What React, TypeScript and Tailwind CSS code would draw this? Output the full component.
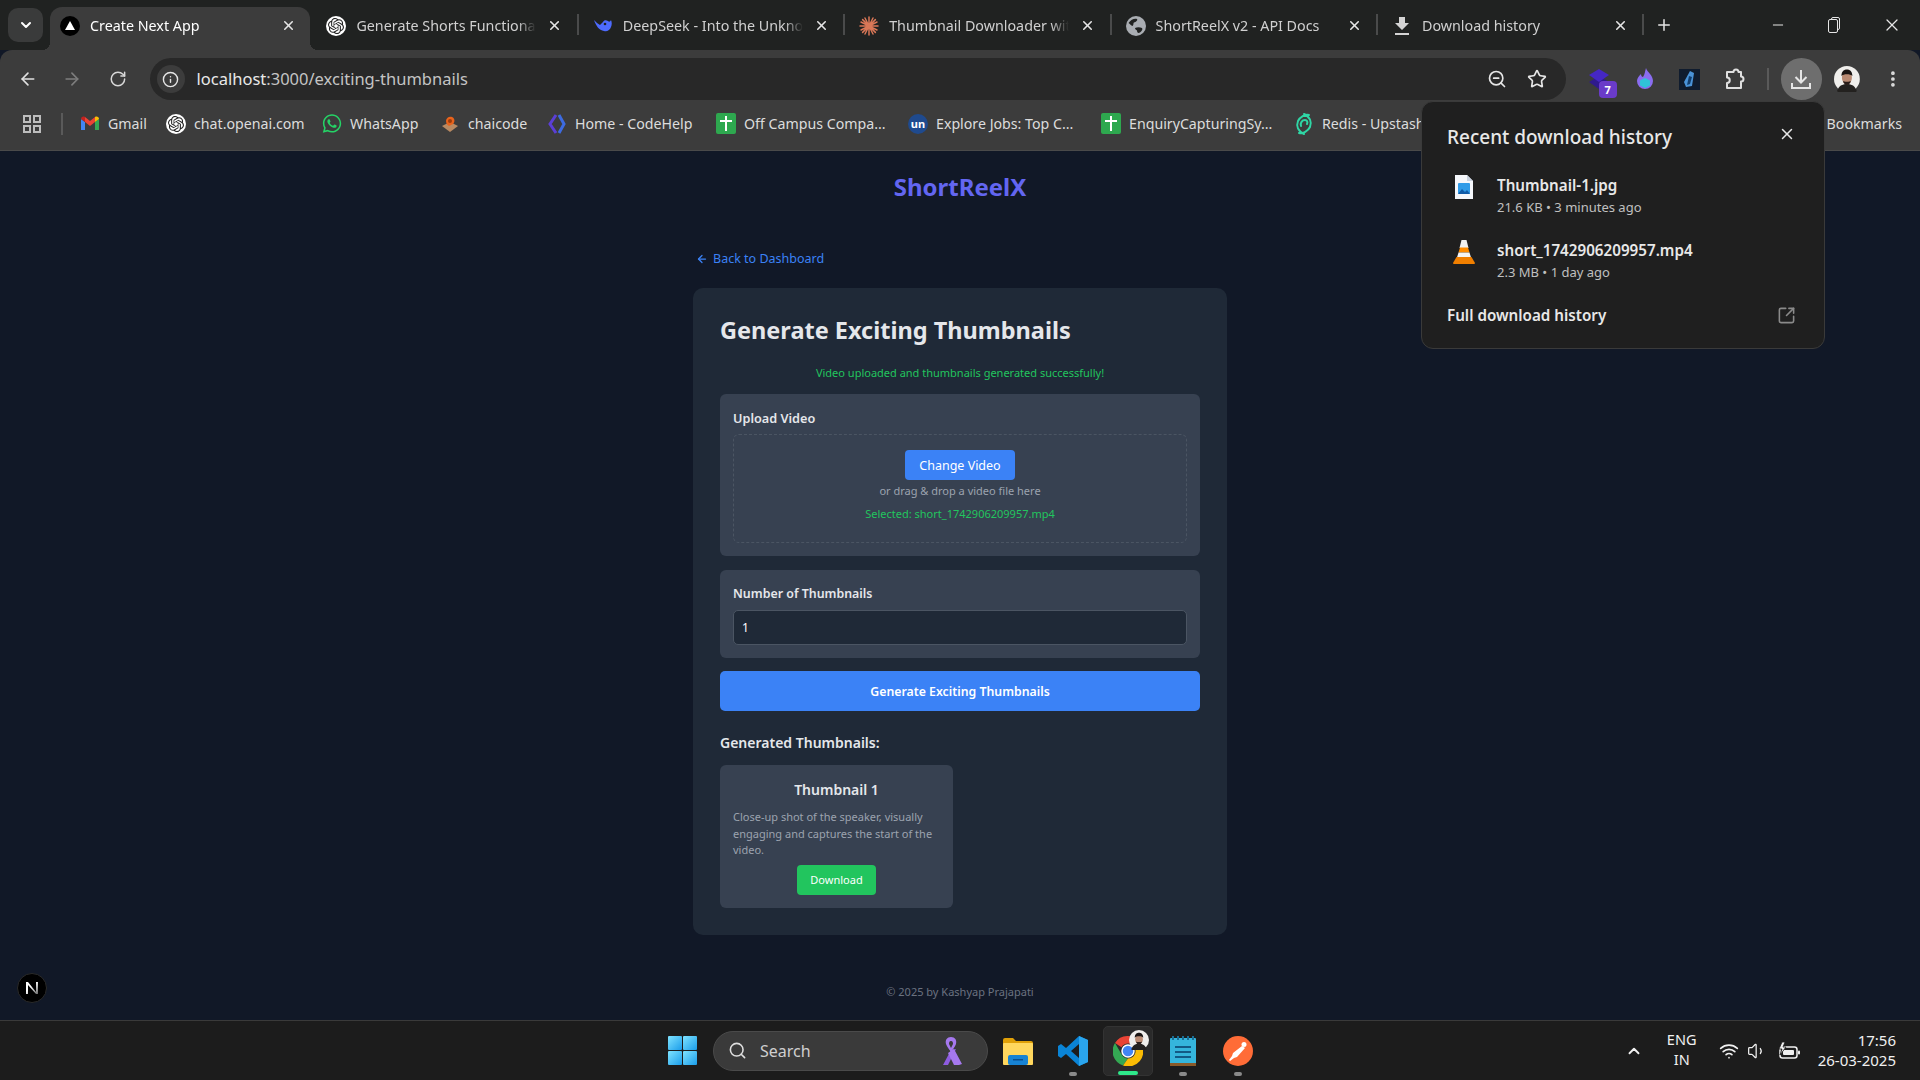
import React from "react";
import {
  ArrowLeft,
  ArrowRight,
  ChevronDown,
  ChevronUp,
  EllipsisVertical,
  Info,
  Minus,
  Plus,
  RotateCw,
  Search,
  SquareArrowOutUpRight,
  Star,
  Volume1,
  Wifi,
  X,
  ZoomOut,
} from "lucide-react";
import { FaWhatsapp } from "react-icons/fa";
import { SiOpenai } from "react-icons/si";

const NextIcon = () => (
  <span className="flex h-5 w-5 items-center justify-center rounded-full bg-black">
    <svg width="10" height="9" viewBox="0 0 10 9"><path d="M5 0l5 9H0z" fill="#fff" /></svg>
  </span>
);

const OpenAiIcon = () => (
  <span className="flex h-5 w-5 items-center justify-center rounded-full bg-white">
    <SiOpenai className="h-4 w-4 text-[#222]" />
  </span>
);

const DeepSeekIcon = () => (
  <svg width="20" height="20" viewBox="0 0 20 20">
    <path d="M1 4c2 6 5 10 10 11 3 1 6-1 7-4 1-2 1-5 0-7-1 2-2 2-3 1-2-1-4-1-5 1L7 9C5 8 3 6 1 4z" fill="#4d6bfe" />
    <circle cx="12" cy="8" r="1.3" fill="#202221" />
  </svg>
);

const ClaudeIcon = () => (
  <svg width="20" height="20" viewBox="0 0 20 20" stroke="#d97757" strokeWidth="1.5" strokeLinecap="round">
    <path d="M10 1v18M1 10h18M3.6 3.6l12.8 12.8M16.4 3.6L3.6 16.4M6 2l8 16M14 2L6 18M2 6l16 8M18 6L2 14" />
  </svg>
);

const GlobeFilled = () => (
  <svg width="20" height="20" viewBox="0 0 20 20">
    <circle cx="10" cy="10" r="10" fill="#a9adb2" />
    <path d="M2.500 7C5 3 9 2 11 3c1 1-1 3-3 3.500C7 7 8 9 6.500 10 5 9.500 4 8 2.500 7zM9 12c2-1 5-1 7 0 1 1 0 3-2 4.500-2 1-3 0-3-2-1-.5-2-1.500-2-2.500z" fill="#202221" />
  </svg>
);

const TabDownload = () => (
  <svg width="16" height="20" viewBox="0 0 16 20" fill="#d4d4d4">
    <path d="M5 1h6v6h4l-7 7-7-7h4z" />
    <rect x="1" y="17" width="14" height="2" />
  </svg>
);

const GmailIcon = () => (
  <svg width="20" height="20" viewBox="0 0 20 20">
    <path d="M1 5v11h4V8z" fill="#4285f4" />
    <path d="M19 5v11h-4V8z" fill="#34a853" />
    <path d="M5 8l5 4 5-4V3l-5 4-5-4z" fill="#ea4335" />
    <path d="M1 5c0-2 2-3 4-2v5z" fill="#c5221f" />
    <path d="M19 5c0-2-2-3-4-2v5z" fill="#fbbc04" />
  </svg>
);

const ChaiIcon = () => (
  <svg width="20" height="20" viewBox="0 0 20 20">
    <path d="M2 12l8-4 8 4-8 6z" fill="#b98a62" />
    <path d="M6 7c0-3 3-5 6-4 3 1 3 5 1 7l-4 2c-2-1-3-3-3-5z" fill="#e8631c" />
    <circle cx="10" cy="7" r="2" fill="#9c3d0c" />
  </svg>
);

const CodeHelpIcon = () => (
  <svg width="20" height="22" viewBox="0 0 20 22" fill="none" strokeWidth="3">
    <path d="M9 2L3 11l6 9" stroke="#5b3fd6" />
    <path d="M12 2l5 9-5 9" stroke="#3d6be0" />
  </svg>
);

const SheetIcon = () => (
  <span className="flex h-[21px] w-5 items-center justify-center rounded-[2px] bg-[#2ea84f]">
    <svg width="12" height="15" viewBox="0 0 12 15" fill="#fff"><path d="M5 0h2v4h5v2H7v9H5V6H0V4h5z" /></svg>
  </span>
);

const UnIcon = () => (
  <span className="flex h-5 w-5 items-center justify-center rounded-full bg-[#1f4a8e] text-[11px] font-bold leading-none text-white">un</span>
);

const RedisIcon = () => (
  <svg width="18" height="24" viewBox="0 0 18 24" fill="none" stroke="#2fd6a5" strokeWidth="2" strokeLinecap="round">
    <path d="M9 22C3 19 1 14 3 9c2-4 7-7 11-6M9 2c6 3 8 8 6 13-2 4-7 7-11 6M6 14c-1-3 1-6 4-6 2 0 3 2 2 4" />
  </svg>
);

const ExtStack = () => (
  <span className="relative flex h-6 w-6 items-center justify-center">
    <svg width="22" height="20" viewBox="0 0 22 20"><path d="M11 7l10 6-10 7-10-7z" fill="#2f1a8c" /><path d="M11 0l10 6-10 7L1 6z" fill="#4527c4" /></svg>
    <span className="absolute left-[12px] top-[14px] flex h-[17px] w-[18px] items-center justify-center rounded-[4px] bg-[#6a3bc9] text-[11px] font-bold leading-none text-white">7</span>
  </span>
);

const ExtFlame = () => (
  <svg width="18" height="22" viewBox="0 0 18 22">
    <path d="M10 0c1 4 7 7 7 13a8 8 0 01-16 0c0-3 2-5 4-7 0 2 1 3 2 3 2-3 2-6 3-9z" fill="#8a6df0" />
    <path d="M9 10l5 2.500v5L9 20l-5-2.500v-5z" fill="#2fc4d8" />
  </svg>
);

const ExtBlue = () => (
  <span className="flex h-[21px] w-[21px] items-center justify-center bg-[#101c2e]">
    <svg width="12" height="18" viewBox="0 0 12 18"><path d="M7 1l4 2-2 13-6 1-2-5z" fill="#4a93d8" /><path d="M6 6l3 1-2 7-3 1z" fill="#123f70" /></svg>
  </span>
);

const PuzzleOutline = () => (
  <svg width="22" height="22" viewBox="0 0 22 22" fill="none" stroke="#e0e0e0" strokeWidth="2" strokeLinejoin="round">
    <path d="M7 4h2.500a2.500 2.500 0 015 0H17v4.500a2.500 2.500 0 010 5V20H3v-5a2.500 2.500 0 000-5.500V4z" />
  </svg>
);

const TrayDownload = () => (
  <svg width="24" height="24" viewBox="0 0 24 24" fill="none" stroke="#e6e6e6" strokeWidth="2">
    <path d="M12 3v12M6.500 10l5.500 5.500 5.500-5.500" />
    <path d="M3 16v5h18v-5" />
  </svg>
);

const Avatar = ({ className }: { className: string }) => (
  <svg className={className} viewBox="0 0 26 26">
    <circle cx="13" cy="13" r="13" fill="#f0efec" />
    <path d="M3 25c2-5 5-7 10-7s8 2 10 7a13 13 0 01-20 0z" fill="#23211f" />
    <ellipse cx="13" cy="12" rx="5" ry="6.500" fill="#b98a72" />
    <path d="M7.500 10c0-5 3-6.500 5.500-6.500s5.500 1.500 5.500 6.500c-2-2.500-9-2.500-11 0z" fill="#1a1513" />
    <path d="M9 15c1 3 2.500 4 4 4s3-1 4-4c-1 1-7 1-8 0z" fill="#2a1e1a" />
  </svg>
);

const WindowsLogo = () => (
  <svg width="29" height="29" viewBox="0 0 29 29">
    <defs>
      <linearGradient id="winA" x1="0" y1="0" x2="1" y2="1">
        <stop offset="0" stopColor="#7fe3ff" />
        <stop offset="1" stopColor="#1a9dea" />
      </linearGradient>
    </defs>
    <rect x="0" y="0" width="14" height="14" rx="1" fill="url(#winA)" />
    <rect x="15" y="0" width="14" height="14" rx="1" fill="url(#winA)" />
    <rect x="0" y="15" width="14" height="14" rx="1" fill="url(#winA)" />
    <rect x="15" y="15" width="14" height="14" rx="1" fill="url(#winA)" />
  </svg>
);

const RibbonIcon = () => (
  <svg width="22" height="30" viewBox="0 0 22 30">
    <path d="M11 14L3 29l-3-1 3 1 5 0 8-16z" fill="#8e5ce0" />
    <path d="M8 17l6 12 5 0 3-1-8-15z" fill="#a578ee" />
    <path d="M11 1c-4 0-6 3-5 7 1 3 3 5 5 8 2-3 4-5 5-8 1-4-1-7-5-7zm0 4c2 0 2 2 2 3l-2 4-2-4c0-1 0-3 2-3z" fill="#a578ee" />
  </svg>
);

const FolderIcon = () => (
  <svg width="30" height="28" viewBox="0 0 30 28">
    <path d="M0 3a2 2 0 012-2h8l3 3h15a2 2 0 012 2v4H0z" fill="#e0a008" />
    <rect x="0" y="6" width="30" height="22" rx="1" fill="#ffd75e" />
    <rect x="5" y="18" width="20" height="10" rx="2" fill="#1783d4" />
    <rect x="10" y="22" width="10" height="1.500" fill="#0a4f8f" />
  </svg>
);

const VsCodeIcon = () => (
  <svg width="30" height="30" viewBox="0 0 30 30">
    <path d="M21 0l9 4v22l-9 4-13-12-5 4-3-2V10l3-2 5 4zm0 8l-8 7 8 7z" fill="#0a84d6" />
    <path d="M21 0l9 4v22l-9 4z" fill="#2aa5ee" />
  </svg>
);

const ChromeIcon = () => (
  <svg width="30" height="30" viewBox="0 0 30 30">
    <path d="M15 0a15 15 0 0113 7.500H15a7.500 7.500 0 00-6.500 3.750L2 7A15 15 0 0115 0z" fill="#ea4335" />
    <path d="M2 7l6.500 11.250A7.500 7.500 0 0015 22.500l-5 7A15 15 0 012 7z" fill="#34a853" />
    <path d="M28 7.500A15 15 0 0110 29.500l5-7a7.500 7.500 0 006.500-11.250z" fill="#fbbc04" />
    <circle cx="15" cy="15" r="6" fill="#4285f4" stroke="#fff" strokeWidth="1.500" />
  </svg>
);

const NotepadIcon = () => (
  <svg width="26" height="30" viewBox="0 0 26 30">
    <rect x="0" y="2" width="26" height="26" rx="1" fill="#35b5dc" />
    <rect x="0" y="27" width="26" height="3" fill="#8a5a2a" />
    <path d="M2 0h2v4H2zM7 0h2v4H7zM12 0h2v4h-2zM17 0h2v4h-2zM22 0h2v4h-2z" fill="#1a6f96" />
    <path d="M5 10h16v2H5zM5 15h16v2H5zM5 20h16v2H5z" fill="#125a85" />
  </svg>
);

const PostmanIcon = () => (
  <svg width="30" height="30" viewBox="0 0 30 30">
    <circle cx="15" cy="15" r="15" fill="#ff6c37" />
    <circle cx="21" cy="8.500" r="2.500" fill="#fff" />
    <path d="M19 10l3 2-8 9-3 1-4 3-1-1 3-4 1-3z" fill="#fff" />
  </svg>
);

const BatteryIcon = () => (
  <svg width="22" height="18" viewBox="0 0 22 18" fill="none">
    <rect x="2" y="5" width="17" height="11" rx="2.500" stroke="#f0f0f0" strokeWidth="1.500" />
    <rect x="5" y="8" width="11" height="5" rx="1" fill="#f0f0f0" />
    <rect x="20" y="8.500" width="2" height="4" rx="1" fill="#f0f0f0" />
    <path d="M4 0L1 7h3l-2 6 6-8H5l2-5z" fill="#f0f0f0" stroke="#1c1c1c" strokeWidth="0.800" />
  </svg>
);

const JpgFileIcon = () => (
  <svg width="18" height="24" viewBox="0 0 18 24">
    <path d="M0 0h12l6 6v18H0z" fill="#f5f7fb" />
    <path d="M12 0l6 6h-6z" fill="#c8d2e0" />
    <rect x="3" y="8" width="12" height="11" rx="1" fill="#2f9be8" />
    <path d="M3 19l4-5 3 3 2-2 3 4z" fill="#0f5ba8" />
  </svg>
);

const VlcIcon = () => (
  <svg width="22" height="24" viewBox="0 0 22 24">
    <path d="M8.500 0h5l2 8h-9z" fill="#f1f1f1" />
    <path d="M7 7.500h8l1.500 5h-11z" fill="#ff8c00" />
    <path d="M5.500 12.500h11l1.500 5H4z" fill="#f4f4f4" />
    <path d="M3.500 17h15l3.500 6a1 1 0 01-1 1H1a1 1 0 01-1-1z" fill="#f07f00" />
  </svg>
);

const tabs = [
  { title: "Create Next App", icon: <NextIcon />, active: true, sep: false },
  { title: "Generate Shorts Functionality", icon: <OpenAiIcon />, active: false, sep: true },
  { title: "DeepSeek - Into the Unknown", icon: <DeepSeekIcon />, active: false, sep: true },
  { title: "Thumbnail Downloader with API", icon: <ClaudeIcon />, active: false, sep: true },
  { title: "ShortReelX v2 - API Docs", icon: <GlobeFilled />, active: false, sep: true },
  { title: "Download history", icon: <TabDownload />, active: false, sep: true },
];

const bookmarks = [
  { label: "Gmail", icon: <GmailIcon />, w: "w-[86px]" },
  { label: "chat.openai.com", icon: <OpenAiIcon />, w: "w-[156px]" },
  { label: "WhatsApp", icon: <FaWhatsapp className="h-[21px] w-[21px] text-[#25d366]" />, w: "w-[118px]" },
  { label: "chaicode", icon: <ChaiIcon />, w: "w-[107px]" },
  { label: "Home - CodeHelp", icon: <CodeHelpIcon />, w: "w-[169px]" },
  { label: "Off Campus Compa...", icon: <SheetIcon />, w: "w-[192px]" },
  { label: "Explore Jobs: Top C...", icon: <UnIcon />, w: "w-[193px]" },
  { label: "EnquiryCapturingSy...", icon: <SheetIcon />, w: "w-[193px]" },
  { label: "Redis - Upstash", icon: <RedisIcon />, w: "w-[130px]" },
];

const TabStrip = () => (
  <div className="flex h-[50px] shrink-0 items-end bg-[#202221] pl-2">
    <div className="mb-2 mr-[2px] flex h-[34px] w-[35px] shrink-0 items-center justify-center self-end rounded-[10px] bg-[#3a3b3b]">
      <ChevronDown className="h-4 w-4 text-white" strokeWidth={3} />
    </div>
    {tabs.map((tab) => (
      <div key={tab.title} className="relative h-[43px] w-[266.4px] shrink-0 pl-[5px] pr-[1px]">
        <div className={`flex h-full items-center rounded-t-[12px] pb-[6px] pl-[10px] ${tab.active ? "bg-[#3c3c3c] text-white" : "text-[#d0d0d0]"}`}>
          <span className="flex w-5 shrink-0 items-center justify-center">{tab.icon}</span>
          <span className="ml-[10px] w-[180px] shrink-0 overflow-hidden whitespace-nowrap text-[14.300px] [mask-image:linear-gradient(to_right,black_90%,transparent)]">{tab.title}</span>
          <X className="ml-[11px] h-[15px] w-[15px] shrink-0 text-[#e6e6e6]" strokeWidth={2.5} />
        </div>
        {tab.active && (
          <>
            <span className="absolute bottom-0 left-[-3px] h-2 w-2 bg-[radial-gradient(circle_at_0_0,transparent_8px,#3c3c3c_8px)]" />
            <span className="absolute bottom-0 right-[-7px] h-2 w-2 bg-[radial-gradient(circle_at_100%_0,transparent_8px,#3c3c3c_8px)]" />
          </>
        )}
        {tab.sep && <span className="absolute right-[-1px] top-[7px] h-[21px] w-[2px] bg-[#4a4b4b]" />}
      </div>
    ))}
    <div className="mb-[15px] ml-[11px] flex h-5 w-5 items-center justify-center">
      <Plus className="h-[18px] w-[18px] text-[#e6e6e6]" strokeWidth={2} />
    </div>
    <div className="mb-[15px] ml-auto flex items-center pr-[18px] text-[#e6e6e6]">
      <Minus className="h-4 w-4" strokeWidth={1.5} />
      <span className="relative ml-[40px] h-4 w-4">
        <span className="absolute left-[5px] top-0 h-[13px] w-[9px] rounded-[2px] border-[1.5px] border-[#e6e6e6]" />
        <span className="absolute left-[2px] top-[2px] h-[14px] w-[10px] rounded-[2px] border-[1.5px] border-[#e6e6e6] bg-[#202221]" />
      </span>
      <X className="ml-[40px] h-5 w-5" strokeWidth={1.5} />
    </div>
  </div>
);

const Toolbar = () => (
  <div className="flex h-[50px] shrink-0 items-end rounded-t-[12px] bg-[#3c3c3c] pl-[18px] pr-[17px]">
    <div className="flex h-[42px] w-full items-center">
      <ArrowLeft className="h-5 w-5 text-[#e0e0e0]" strokeWidth={2} />
      <ArrowRight className="ml-[24px] h-5 w-5 text-[#7d7d7d]" strokeWidth={2} />
      <RotateCw className="ml-[27px] h-[18px] w-[18px] text-[#d8d8d8]" strokeWidth={2} />
      <div className="ml-[23px] flex h-[42px] w-[1416px] shrink-0 items-center rounded-full bg-[#282828] pl-[7px] pr-[19px]">
        <span className="flex h-[28px] w-[28px] items-center justify-center rounded-full bg-[#3c3c3c]">
          <Info className="h-[17px] w-[17px] text-[#e6e6e6]" />
        </span>
        <span className="ml-[12px] text-[16.500px] text-[#e8e8e8]">
          localhost<span className="text-[#c4c4c4]">:3000/exciting-thumbnails</span>
        </span>
        <ZoomOut className="ml-auto h-5 w-5 text-[#e6e6e6]" strokeWidth={2} />
        <Star className="ml-[20px] h-5 w-5 text-[#e6e6e6]" strokeWidth={2} />
      </div>
      <span className="ml-[21px]"><ExtStack /></span>
      <span className="ml-[25px]"><ExtFlame /></span>
      <span className="ml-[25px]"><ExtBlue /></span>
      <span className="ml-[24px]"><PuzzleOutline /></span>
      <span className="ml-[21px] h-[22px] w-[2px] bg-[#5a5a5a]" />
      <span className="ml-[12px] flex h-[42px] w-[42px] items-center justify-center rounded-full bg-[#6e6e6e]">
        <TrayDownload />
      </span>
      <Avatar className="ml-[12px] h-[26px] w-[26px]" />
      <EllipsisVertical className="ml-[23px] h-5 w-5 text-[#e0e0e0]" strokeWidth={2.5} />
    </div>
  </div>
);

const BookmarksBar = () => (
  <div className="flex h-[51px] shrink-0 items-center border-b border-[#4a4a4a] bg-[#3c3c3c] pb-[2px] pl-[23px] text-[14.200px] text-[#dcdcdc]">
    <div className="grid h-[18px] w-[18px] shrink-0 grid-cols-2 gap-[2px]">
      <span className="border-2 border-[#bdbdbd]" />
      <span className="border-2 border-[#bdbdbd]" />
      <span className="border-2 border-[#bdbdbd]" />
      <span className="border-2 border-[#bdbdbd]" />
    </div>
    <span className="ml-[20px] mr-[17px] h-[22px] w-[2px] bg-[#5a5a5a]" />
    {bookmarks.map((b) => (
      <div key={b.label} className={`flex shrink-0 items-center whitespace-nowrap ${b.w}`}>
        <span className="flex w-5 shrink-0 items-center justify-center">{b.icon}</span>
        <span className="ml-[8px]">{b.label}</span>
      </div>
    ))}
    <span className="ml-auto pr-[18px]">Bookmarks</span>
  </div>
);

const DownloadPopup = () => (
  <div className="absolute left-[1421px] top-[101px] flex h-[248px] w-[404px] flex-col rounded-[12px] border border-[#3a3a3a] bg-[#1f1f1f] pl-[25px] pr-[28px] pt-[21px] text-[#e8e8e8]">
    <div className="flex h-[28px] items-center justify-between">
      <span className="text-[19px] font-medium">Recent download history</span>
      <X className="h-[18px] w-[18px] -translate-y-[3px]" strokeWidth={2} />
    </div>
    <div className="mt-[24px] flex h-[41px] items-start">
      <span className="flex w-[34px] shrink-0 justify-center"><JpgFileIcon /></span>
      <div className="ml-[16px]">
        <div className="text-[15.200px] font-semibold leading-5">Thumbnail-1.jpg</div>
        <div className="mt-[2px] text-[13px] leading-5 text-[#c0c0c0]">21.6 KB • 3 minutes ago</div>
      </div>
    </div>
    <div className="mt-[24px] flex h-[41px] items-start">
      <span className="flex w-[34px] shrink-0 justify-center"><VlcIcon /></span>
      <div className="ml-[16px]">
        <div className="text-[15.200px] font-semibold leading-5">short_1742906209957.mp4</div>
        <div className="mt-[2px] text-[13px] leading-5 text-[#c0c0c0]">2.3 MB • 1 day ago</div>
      </div>
    </div>
    <div className="mt-[24px] flex h-5 items-center justify-between">
      <span className="text-[15.200px] font-semibold">Full download history</span>
      <SquareArrowOutUpRight className="h-[19px] w-[19px] text-[#8a8a8a]" strokeWidth={2} />
    </div>
  </div>
);

const MainPage = () => (
  <main className="flex min-h-0 flex-1 flex-col items-center bg-[#111827]">
    <div className="flex h-[72px] shrink-0 items-center text-[24px] font-bold text-[#6366f1]">ShortReelX</div>
    <div className="w-[534px]">
      <div className="mt-[26px] flex h-5 items-center pl-[3px] text-[12.500px] text-[#3b82f6]">
        <ArrowLeft className="h-3 w-3" strokeWidth={2.5} />
        <span className="ml-[5px]">Back to Dashboard</span>
      </div>
      <div className="mt-[19px] rounded-[10px] bg-[#1f2937] px-[27px] pb-[27px] pt-[25px]">
        <h1 className="text-[23.500px] font-bold leading-[34px] text-[#e5e7eb]">Generate Exciting Thumbnails</h1>
        <p className="mt-[18px] text-center text-[11px] leading-4 text-[#22c55e]">Video uploaded and thumbnails generated successfully!</p>
        <div className="mt-[13px] rounded-[6px] bg-[#374151] px-[13px] pb-[13px] pt-[16px]">
          <div className="text-[12.700px] font-semibold leading-4 text-[#e5e7eb]">Upload Video</div>
          <div className="mt-[8px] flex h-[109px] flex-col items-center rounded-[6px] border border-dashed border-[#4b5563] pt-[15px]">
            <button className="flex h-[30px] w-[110px] items-center justify-center rounded-[4px] bg-[#3b82f6] pt-[2px] text-[12.500px] text-white">Change Video</button>
            <p className="mt-[3px] text-[11px] leading-4 text-[#9ca3af]">or drag &amp; drop a video file here</p>
            <p className="mt-[7px] text-[11px] leading-4 text-[#22c55e]">Selected: short_1742906209957.mp4</p>
          </div>
        </div>
        <div className="mt-[14px] rounded-[6px] bg-[#374151] px-[13px] pb-[13px] pt-[16px]">
          <div className="text-[12.400px] font-semibold leading-4 text-[#e5e7eb]">Number of Thumbnails</div>
          <div className="mt-[8px] flex h-[35px] items-center rounded-[5px] border border-[#4b5563] bg-[#1f2937] px-2 text-[12px] text-white">1</div>
        </div>
        <button className="mt-[13px] flex h-[40px] w-full items-center justify-center rounded-[5px] bg-[#3b82f6] pt-[2px] text-[12.300px] font-semibold text-white">Generate Exciting Thumbnails</button>
        <h2 className="mt-[22px] text-[14px] font-semibold leading-5 text-[#e5e7eb]">Generated Thumbnails:</h2>
        <div className="mt-[12px] flex w-[233px] flex-col items-center rounded-[6px] bg-[#374151] px-[13px] pb-[13px] pt-[15px]">
          <div className="text-[14px] font-semibold leading-5 text-[#e5e7eb]">Thumbnail 1</div>
          <p className="mt-[9px] w-full text-[11px] leading-[16.5px] text-[#9ca3af]">Close-up shot of the speaker, visually engaging and captures the start of the video.</p>
          <button className="mt-[6.500px] flex h-[30px] w-[79px] items-center justify-center rounded-[4px] bg-[#22c55e] text-[11px] text-white">Download</button>
        </div>
      </div>
      <p className="mt-[49px] text-center text-[11px] leading-4 text-[#6b7280]">© 2025 by Kashyap Prajapati</p>
    </div>
  </main>
);

const TaskTile = ({ children, indicator, active }: { children: React.ReactNode; indicator?: string; active?: boolean }) => (
  <div className={`relative flex h-[50px] w-[50px] shrink-0 items-center justify-center rounded-[5px] ${active ? "border border-[#333] bg-[#2a2a2a]" : ""}`}>
    {children}
    {indicator && <span className={`absolute bottom-0 h-[4px] rounded-full ${indicator}`} />}
  </div>
);

const Taskbar = () => (
  <footer className="grid h-[60px] shrink-0 grid-cols-[1fr_auto_1fr] items-center border-t border-[#3a3a3a] bg-[#1c1c1c] text-white">
    <div />
    <div className="flex items-center">
      <TaskTile><WindowsLogo /></TaskTile>
      <div className="ml-[6px] flex h-[40px] w-[275px] items-center rounded-full border border-[#4a4a4a] bg-[#3a3a3a] pl-[14px] pr-[25px]">
        <Search className="h-[19px] w-[19px] text-[#dedede]" strokeWidth={2} />
        <span className="ml-[13px] text-[16px] text-[#cfcfcf]">Search</span>
        <span className="ml-auto"><RibbonIcon /></span>
      </div>
      <div className="ml-[5px] flex items-center gap-[5px]">
        <TaskTile><FolderIcon /></TaskTile>
        <TaskTile indicator="w-[8px] bg-[#8a8a8a]"><VsCodeIcon /></TaskTile>
        <TaskTile active indicator="w-[20px] bg-[#2ee88a]">
          <ChromeIcon />
          <Avatar className="absolute right-[3px] top-[3px] h-[20px] w-[20px]" />
        </TaskTile>
        <TaskTile indicator="w-[8px] bg-[#8a8a8a]"><NotepadIcon /></TaskTile>
        <TaskTile indicator="w-[8px] bg-[#8a8a8a]"><PostmanIcon /></TaskTile>
      </div>
    </div>
    <div className="flex items-center justify-end pr-[24px] text-[#f0f0f0]">
      <ChevronUp className="h-[18px] w-[18px]" strokeWidth={2.5} />
      <div className="-mt-[3px] ml-[19px] w-[40px] text-center text-[14.500px] leading-[20px]">
        <div>ENG</div>
        <div>IN</div>
      </div>
      <Wifi className="ml-[17px] h-5 w-5" strokeWidth={2} />
      <Volume1 className="ml-[8px] h-5 w-5" strokeWidth={1.5} />
      <span className="ml-[11px]"><BatteryIcon /></span>
      <div className="-mt-[2px] ml-[18px] text-right text-[15px] leading-[20px]">
        <div>17:56</div>
        <div>26-03-2025</div>
      </div>
    </div>
  </footer>
);

export default function App() {
  return (
    <div className="relative flex h-screen w-full flex-col overflow-hidden bg-[#111827] font-['Noto_Sans',sans-serif]">
      <TabStrip />
      <Toolbar />
      <BookmarksBar />
      <MainPage />
      <Taskbar />
      <DownloadPopup />
      <div className="absolute left-[17px] top-[973px] flex h-[30px] w-[30px] items-center justify-center rounded-full border border-[#2a2a2a] bg-black">
        <svg width="14" height="14" viewBox="0 0 14 14">
          <defs>
            <linearGradient id="nextN" x1="0" y1="0" x2="1" y2="1">
              <stop offset="0.4" stopColor="#fff" />
              <stop offset="1" stopColor="#666" />
            </linearGradient>
          </defs>
          <path d="M1 1h2l8 10V1h2v12h-2L3 4v9H1z" fill="url(#nextN)" />
        </svg>
      </div>
    </div>
  );
}
